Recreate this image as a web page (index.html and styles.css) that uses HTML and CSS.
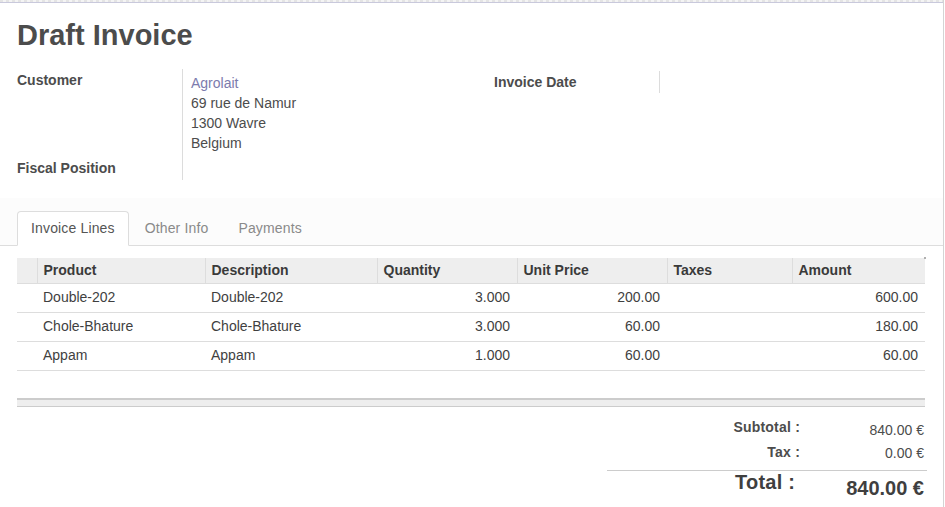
FILE: index.html
```html
<!DOCTYPE html>
<html lang="en">
<head>
<meta charset="utf-8">
<title>Draft Invoice</title>
<link rel="stylesheet" href="styles.css">
</head>
<body>
<div class="sheet">
  <div class="topbar"></div>
  <div class="header">
    <h1 class="title">Draft Invoice</h1>
    <div class="groups">
      <div class="group group-left">
        <div class="label label-first">Customer</div>
        <div class="value value-first">
          <a class="link" href="#">Agrolait</a><br>
          69 rue de Namur<br>
          1300 Wavre<br>
          Belgium
        </div>
        <div class="label label-second">Fiscal Position</div>
        <div class="value value-second"></div>
      </div>
      <div class="group group-right">
        <div class="label label-date">Invoice Date</div>
        <div class="value value-date"></div>
      </div>
    </div>
  </div>

  <div class="notebook">
    <ul class="tabs">
      <li class="tab active">Invoice Lines</li>
      <li class="tab">Other Info</li>
      <li class="tab">Payments</li>
    </ul>
  </div>

  <div class="lines">
    <table class="grid">
      <colgroup>
        <col class="c-handle"><col class="c-product"><col class="c-desc"><col class="c-qty"><col class="c-price"><col class="c-taxes"><col class="c-amount">
      </colgroup>
      <thead>
        <tr>
          <th class="handle"></th>
          <th>Product</th>
          <th>Description</th>
          <th>Quantity</th>
          <th>Unit Price</th>
          <th>Taxes</th>
          <th>Amount</th>
        </tr>
      </thead>
      <tbody>
        <tr>
          <td class="handle"></td>
          <td>Double-202</td>
          <td>Double-202</td>
          <td class="num">3.000</td>
          <td class="num">200.00</td>
          <td></td>
          <td class="num">600.00</td>
        </tr>
        <tr>
          <td class="handle"></td>
          <td>Chole-Bhature</td>
          <td>Chole-Bhature</td>
          <td class="num">3.000</td>
          <td class="num">60.00</td>
          <td></td>
          <td class="num">180.00</td>
        </tr>
        <tr>
          <td class="handle"></td>
          <td>Appam</td>
          <td>Appam</td>
          <td class="num">1.000</td>
          <td class="num">60.00</td>
          <td></td>
          <td class="num">60.00</td>
        </tr>
      </tbody>
    </table>
    <div class="list-footer"></div>
  </div>

  <div class="totals">
    <div class="t-label row1">Subtotal :</div>
    <div class="t-value row1">840.00 €</div>
    <div class="t-label row2">Tax :</div>
    <div class="t-value row2">0.00 €</div>
    <div class="t-label total-label">Total :</div>
    <div class="t-value total-value">840.00 €</div>
  </div>
</div>
</body>
</html>
```

FILE: styles.css
```css
html, body {
  margin: 0;
  padding: 0;
  background: #ffffff;
}

body {
  font-family: "Liberation Sans", Arial, sans-serif;
  font-size: 14px;
  line-height: 20px;
  color: #4c4c4c;
}

.sheet {
  width: 944px;
  min-height: 507px;
  box-sizing: border-box;
  border-right: 1px solid #d4d4d4;
  overflow: hidden;
}

.topbar {
  height: 2px;
  background: repeating-linear-gradient(90deg, #e4e4e4 0 3px, #f4f4f4 3px 6px);
  border-bottom: 1px solid #c9c9dc;
}

.header {
  padding: 0 17px;
}

.title {
  margin: 15px 0 0;
  font-size: 29px;
  line-height: 34px;
  font-weight: bold;
  color: #4c4c4c;
}

.groups {
  display: flex;
  align-items: flex-start;
  margin-top: 17px;
}

.group {
  display: grid;
  grid-template-columns: 165px 1fr;
}

.group-left {
  width: 477px;
}

.group-right {
  width: 300px;
  margin-top: 2px;
}

.label {
  font-weight: bold;
  color: #4c4c4c;
}

.value {
  border-left: 1px solid #dcdcdc;
  padding-left: 8px;
}

.label-first {
  padding-top: 1px;
}

.value-first {
  padding-top: 4px;
}

.label-second {
  padding-top: 5px;
  padding-bottom: 2px;
}

.label-date {
  padding-top: 1px;
  padding-bottom: 1px;
}

.value-date {
  min-height: 22px;
}

.link {
  color: #7c7bad;
  text-decoration: none;
}

.notebook {
  margin-top: 18px;
  padding-top: 13px;
  background: #fcfcfc;
}

.tabs {
  list-style: none;
  margin: 0;
  padding: 0 0 0 17px;
  display: flex;
  border-bottom: 1px solid #dddddd;
}

.tab {
  margin: 0 2px -1px 0;
  padding: 6px 13px 7px;
  border: 1px solid transparent;
  border-radius: 4px 4px 0 0;
  color: #8a8a8a;
  letter-spacing: 0.15px;
}

.tab.active {
  background: #ffffff;
  border-color: #dddddd;
  border-bottom-color: #ffffff;
  color: #555555;
}

.lines {
  position: relative;
  margin: 12px 18px 0 17px;
}

.lines::after {
  content: "";
  position: absolute;
  right: -1px;
  top: -1px;
  width: 2px;
  height: 2px;
  background: #b0b0b0;
}

.grid {
  width: 908px;
  table-layout: fixed;
  border-collapse: collapse;
  border-spacing: 0;
}

.c-handle { width: 20px; }
.c-product { width: 168px; }
.c-desc { width: 172px; }
.c-qty { width: 140px; }
.c-price { width: 150px; }
.c-taxes { width: 125px; }
.c-amount { width: 133px; }

.grid th {
  background: #eeeeee;
  text-align: left;
  font-weight: bold;
  color: #3a3a3a;
  padding: 2px 6px 3px;
  border-left: 1px solid #dddddd;
  border-bottom: 1px solid #dddddd;
  white-space: nowrap;
}

.grid th.handle {
  border-left: none;
}

.grid td {
  padding: 3px 6px 5px;
  border-bottom: 1px solid #dddddd;
  color: #3f3f3f;
  white-space: nowrap;
}

.grid td.num {
  text-align: right;
  padding-right: 7px;
}

.list-footer {
  margin-top: 27px;
  height: 6px;
  background: #eeeeee;
  border-top: 2px solid #cccccc;
  border-bottom: 1px solid #cccccc;
}

.totals {
  display: grid;
  grid-template-columns: 193px 127px;
  width: 320px;
  margin: 9px 16px 0 auto;
}

.t-label {
  text-align: right;
  font-weight: bold;
  color: #4c4c4c;
  letter-spacing: 0.2px;
}

.t-value {
  text-align: right;
  color: #4c4c4c;
  padding-right: 3px;
}

.t-label.row1 {
  padding: 1px 0 3px;
}

.t-value.row1 {
  padding-top: 4px;
}

.t-label.row2 {
  padding: 2px 0 2px;
}

.t-value.row2 {
  padding-top: 3px;
  padding-bottom: 1px;
}

.total-label,
.total-value {
  font-size: 20px;
  border-top: 1px solid #cccccc;
  margin-top: 6px;
}

.total-label {
  line-height: 22px;
  padding: 0 5px 0 0;
  color: #3f3f3f;
}

.total-value {
  line-height: 24px;
  font-weight: bold;
  padding: 5px 3px 0 0;
  color: #3f3f3f;
}
```
